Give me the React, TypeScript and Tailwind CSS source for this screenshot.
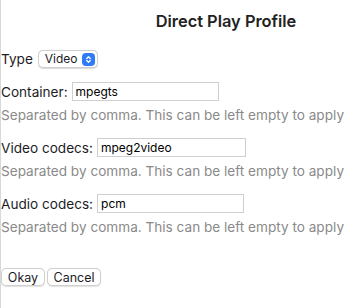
export default function App() {
  const fields = [
    { label: "Container:", value: "mpegts", w: "w-[147px]" },
    { label: "Video codecs:", value: "mpeg2video", w: "w-[149px]" },
    { label: "Audio codecs:", value: "pcm", w: "w-[147px]" },
  ];
  return (
    <div className="h-[308px] w-[344px] overflow-hidden border-l border-[#d8d8d8] bg-white font-['Inter',sans-serif] text-[13.6px] text-[#1d1d1f]">
      <div className="w-[450px]">
        <h1 className="pt-[11px] text-center text-[16.4px] font-semibold leading-[20px] text-[#222]">
          Direct Play Profile
        </h1>
        <div className="mt-[19px] flex items-center gap-[5px]">
          <span className="leading-[18px]">Type</span>
          <div className="flex h-[18px] w-[60px] items-center justify-between rounded-[5px] border border-[#d0d0d0] bg-white pl-[6px] pr-[2px] text-[12px] shadow-[0_0.5px_1px_rgba(0,0,0,0.15)]">
            <span>Video</span>
            <span className="flex h-[13px] w-[13px] items-center justify-center rounded-[4px] bg-[#2f7cf6]">
              <svg width="7" height="9" viewBox="0 0 8 10" fill="none" stroke="white" strokeWidth="1.5" strokeLinecap="round" strokeLinejoin="round">
                <path d="M2 3.8 4 1.8 6 3.8" />
                <path d="M2 6.2 4 8.2 6 6.2" />
              </svg>
            </span>
          </div>
        </div>
        <div className="mt-[14px] flex flex-col gap-[14px]">
          {fields.map((f) => (
            <div key={f.label}>
              <div className="flex items-center gap-[4px]">
                <span className="leading-[18px]">{f.label}</span>
                <div className={`flex h-[19px] ${f.w} items-center border border-[#cfcfcf] bg-white px-[3px] text-[12px] text-black`}>
                  {f.value}
                </div>
              </div>
              <p className="mt-[6px] whitespace-nowrap leading-[17px] text-[#8a8a8a]">
                Separated by comma. This can be left empty to apply to all containers.
              </p>
            </div>
          ))}
        </div>
        <div className="mt-[32px] flex gap-[2px]">
          <button className="h-[18px] w-[44px] rounded-[5px] border border-[#d0d0d0] bg-white text-[12.5px] leading-[15px] shadow-[0_0.5px_1px_rgba(0,0,0,0.12)]">
            Okay
          </button>
          <button className="h-[18px] w-[54px] rounded-[5px] border border-[#d0d0d0] bg-white text-[12.5px] leading-[15px] shadow-[0_0.5px_1px_rgba(0,0,0,0.12)]">
            Cancel
          </button>
        </div>
      </div>
    </div>
  );
}
